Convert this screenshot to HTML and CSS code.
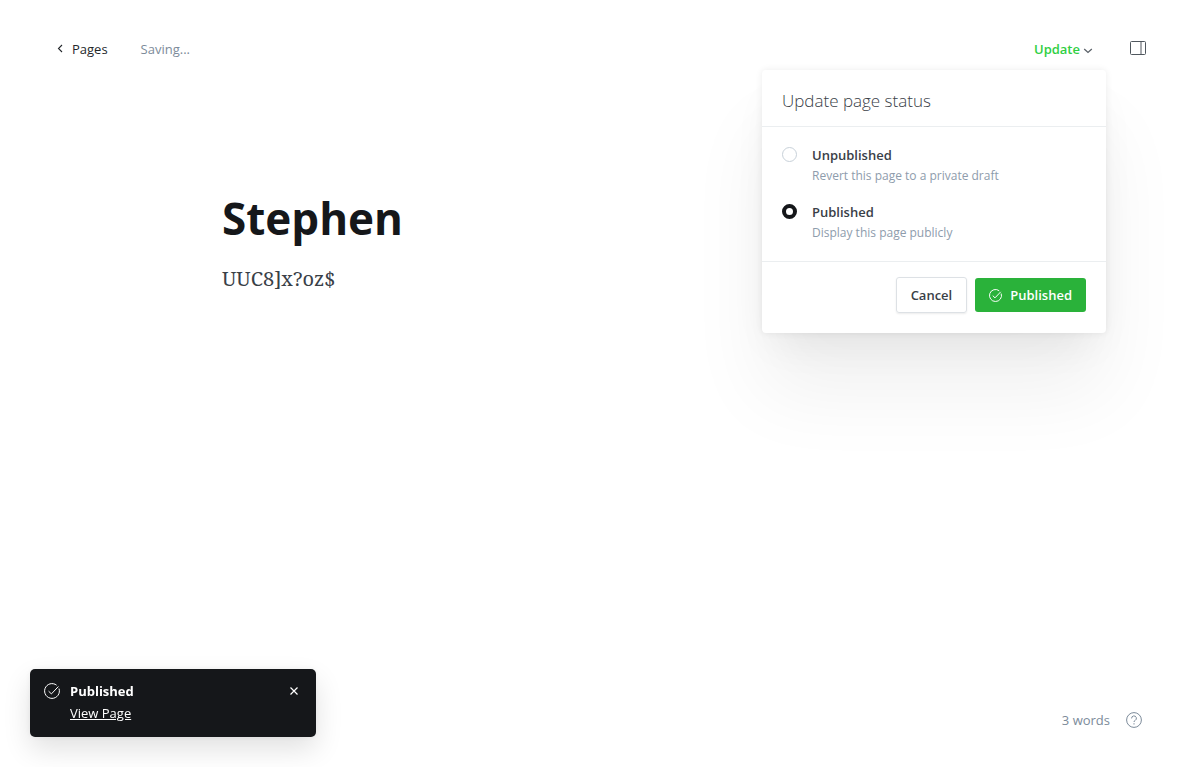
FILE: index.html
```html
<!DOCTYPE html>
<html lang="en">
<head>
<meta charset="utf-8">
<meta name="viewport" content="width=device-width, initial-scale=1">
<title>Stephen</title>
<link rel="stylesheet" href="styles.css">
</head>
<body>
<div class="editor">
  <header class="topbar">
    <a class="back" href="#pages">
      <svg class="back-icon" viewBox="0 0 6 9" aria-hidden="true"><path d="M5 1 1.5 4.5 5 8"/></svg>
      <span>Pages</span>
    </a>
    <span class="status">Saving...</span>
    <div class="actions">
      <div class="publish">
        <button class="update" type="button" aria-expanded="true">
          <span>Update</span>
          <svg class="caret" viewBox="0 0 10 6" aria-hidden="true"><path d="M1.2 1 5 4.4 8.8 1"/></svg>
        </button>
        <form class="popover">
          <h2 class="popover-title">Update page status</h2>
          <div class="options">
            <div class="option">
              <input class="radio" type="radio" name="status" id="unpublished">
              <label class="option-text" for="unpublished"><span class="option-name">Unpublished</span><span class="option-hint">Revert this page to a private draft</span></label>
            </div>
            <div class="option">
              <input class="radio" type="radio" name="status" id="published" checked>
              <label class="option-text" for="published"><span class="option-name">Published</span><span class="option-hint">Display this page publicly</span></label>
            </div>
          </div>
          <div class="popover-footer">
            <button class="button" type="button">Cancel</button>
            <button class="button button-green" type="button">
              <svg class="check" viewBox="0 0 16 16" aria-hidden="true"><path d="M15 5.6A7.4 7.4 0 1 1 12.6 2.2M4.6 8.2l2.8 2.7 7-7.4"/></svg>
              <span>Published</span>
            </button>
          </div>
        </form>
      </div>
      <button class="icon-button" type="button" aria-label="Settings">
        <svg class="panel-icon" viewBox="0 0 16 14" aria-hidden="true"><rect x=".5" y=".5" width="15" height="13" rx="1"/><path d="M11 .5v13"/></svg>
      </button>
    </div>
  </header>
  <main class="content">
    <h1 class="title">Stephen</h1>
    <p class="text">UUC8]x?oz$</p>
  </main>
  <footer class="footer">
    <span>3 words</span>
    <a class="help" href="#help" aria-label="Help">
      <svg class="help-icon" viewBox="0 0 16 16" aria-hidden="true"><circle cx="8" cy="8" r="7.4"/><path d="M5.6 6.4a2.4 2.4 0 1 1 3.6 2c-.8.4-1.2.8-1.2 1.6"/><path d="M8 11.2v1.3"/></svg>
    </a>
  </footer>
</div>
<aside class="toast" role="status">
  <svg class="toast-icon" viewBox="0 0 16 16" aria-hidden="true"><path d="M15 5.6A7.4 7.4 0 1 1 12.6 2.2M4.6 8.2l2.8 2.7 7-7.4"/></svg>
  <div class="toast-body">
    <strong class="toast-title">Published</strong>
    <a class="toast-link" href="#view">View Page</a>
  </div>
  <button class="close" type="button" aria-label="Close">
    <svg class="close-icon" viewBox="0 0 8 8" aria-hidden="true"><path d="m.5.5 7 7m0-7-7 7"/></svg>
  </button>
</aside>
</body>
</html>
```
FILE: styles.css
```css
* { box-sizing: border-box; }
body {
  margin: 0;
  background: #fff;
  color: #394047;
  font: 13px/20px "Open Sans", "Noto Sans", sans-serif;
}
button { margin: 0; padding: 0; border: 0; background: none; color: inherit; font: inherit; cursor: pointer; }
a { color: inherit; text-decoration: none; }
svg { display: block; flex: none; fill: none; stroke: currentColor; }

.editor { display: flex; flex-direction: column; min-height: 100vh; }
.topbar { display: flex; align-items: center; height: 98px; padding: 0 38px 0 57px; }
.back { display: flex; align-items: center; gap: 9px; color: #24282c; font-weight: 500; }
.back-icon { width: 6px; height: 9px; margin-bottom: 2px; stroke-width: 1.1; }
.status { margin-left: 33px; color: #7c8b9a; }
.actions { display: flex; align-items: center; gap: 37px; margin-left: auto; }
.publish { position: relative; }
.update { display: flex; align-items: center; gap: 3px; color: #30cf43; font-weight: 600; }
.caret { width: 10px; height: 6px; margin-top: 3px; color: #5a6168; stroke-width: 1.3; }
.panel-icon { width: 16px; height: 14px; margin-bottom: 2px; color: #50575e; stroke-width: 1; }

.popover {
  position: absolute;
  z-index: 2;
  top: 31px;
  right: -13px;
  width: 344px;
  border-radius: 4px;
  background: #fff;
  box-shadow: 0 0 7px rgba(0, 0, 0, .08), 0 20px 40px -12px rgba(0, 0, 0, .07), 0 60px 80px rgba(0, 0, 0, .06);
}
.popover-title { margin: 0; padding: 20px 20px 14px; border-bottom: 1px solid #ebeef0; font-size: 17px; line-height: 22px; font-weight: 300; }
.options { display: flex; flex-direction: column; gap: 15px; padding: 18px 20px 17px; }
.option { display: flex; gap: 15px; }
.radio { appearance: none; flex: none; width: 15px; height: 15px; margin: 2px 0 0; border: 1px solid #c8d1d9; border-radius: 50%; background: #fff; }
.radio:checked { border: 4px solid #15171a; }
.option-text { display: flex; flex-direction: column; }
.option-name { font-weight: 600; }
.option-hint { color: #8e9cac; font-size: 12px; line-height: 22px; }
.popover-footer { display: flex; align-items: center; justify-content: flex-end; gap: 8px; padding: 15px 20px 20px; border-top: 1px solid #ebeef0; }
.button { height: 36px; padding: 0 14px; border: 1px solid #dde1e5; border-radius: 3px; box-shadow: 0 1px 2px rgba(0, 0, 0, .08); font-weight: 600; }
.button-green { display: flex; align-items: center; gap: 8px; height: 34px; border: 0; background: #2ab23a; box-shadow: none; color: #fff; }
.check { width: 13px; height: 13px; stroke-width: 1.2; }

.content { flex: 1; width: 100%; max-width: 780px; margin: 0 auto; padding: 90px 20px 0; }
.title { margin: 0; color: #15171a; font-size: 44px; line-height: 60px; font-weight: 700; }
.text { margin: 15px 0 0; font: 20px/32px "Noto Serif", "Liberation Serif", serif; }

.footer { display: flex; align-items: center; justify-content: flex-end; gap: 16px; padding: 0 42px 37px; color: #7c8b9a; }
.help-icon { width: 16px; height: 16px; stroke-width: 1; }

.toast {
  position: fixed;
  z-index: 3;
  left: 30px;
  bottom: 30px;
  display: flex;
  width: 286px;
  padding: 12px 18px 14px 14px;
  border-radius: 5px;
  background: #15171a;
  color: #fff;
  box-shadow: 0 0 7px rgba(0, 0, 0, .06), 0 12px 28px rgba(0, 0, 0, .12);
}
.toast-icon { width: 16px; height: 16px; margin-top: 2px; stroke-width: 1; }
.toast-body { display: flex; flex: 1; flex-direction: column; align-items: flex-start; gap: 2px; margin-left: 10px; }
.toast-title { font-weight: 700; }
.toast-link { text-decoration: underline; }
.close { height: 20px; }
.close-icon { width: 8px; height: 8px; stroke-width: 1.2; }
```
